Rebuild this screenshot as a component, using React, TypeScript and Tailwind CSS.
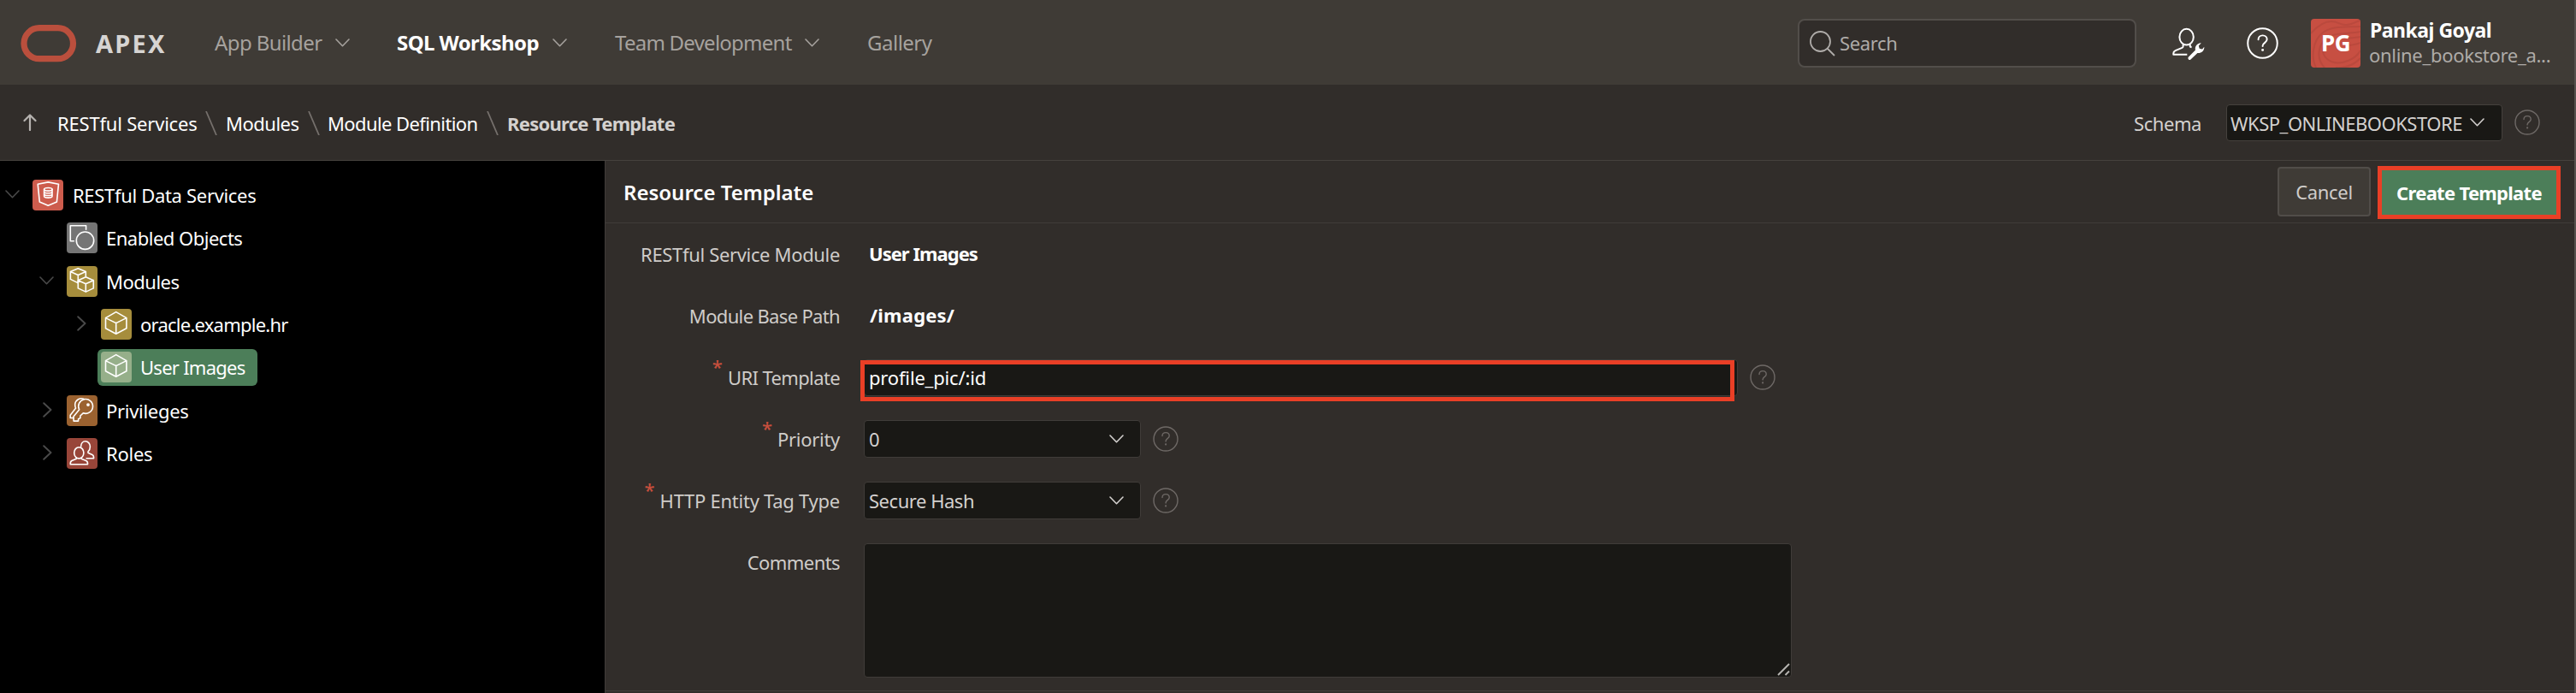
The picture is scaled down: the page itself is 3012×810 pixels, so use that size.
import type { ReactNode } from "react";

function Chevron({ className = "", dir = "down" }: { className?: string; dir?: "down" | "right" }) {
  return dir === "down" ? (
    <svg className={`h-[10px] w-[17px] shrink-0 ${className}`} viewBox="0 0 17 10" fill="none" stroke="currentColor" strokeWidth="1.6" strokeLinecap="round" strokeLinejoin="round">
      <path d="M1 1l7.5 7.7L16 1" />
    </svg>
  ) : (
    <svg className={`h-[18px] w-[11px] shrink-0 ${className}`} viewBox="0 0 11 18" fill="none" stroke="currentColor" strokeWidth="1.9" strokeLinecap="round" strokeLinejoin="round">
      <path d="M1.2 1.2L9.5 9l-8.3 7.8" />
    </svg>
  );
}

function Help({ className, thick = 1.4 }: { className: string; thick?: number }) {
  return (
    <svg className={`shrink-0 ${className}`} viewBox="0 0 30 30" fill="none" stroke="currentColor" strokeWidth={thick} strokeLinecap="round" strokeLinejoin="round">
      <circle cx="15" cy="15" r="14" />
      <path d="M11 11.6c0-2.3 1.7-4 4.1-4s4.1 1.7 4.1 3.8c0 3.2-4.1 3.3-4.1 6v.5" />
      <circle cx="15.1" cy="21.4" r="0.7" fill="currentColor" stroke="none" />
      <circle cx="15.1" cy="21.4" r="0.4" />
    </svg>
  );
}

function UserWrench() {
  return (
    <svg className="h-[38px] w-[38px] shrink-0" viewBox="0 0 38 38" fill="none" stroke="currentColor" strokeWidth="2" strokeLinejoin="round">
      <ellipse cx="16.6" cy="11.2" rx="8.2" ry="9.4" />
      <path d="M12.6 20v2.2c0 .8-.5 1.3-1.2 1.6l-7.8 3.3C2.2 27.8 1.3 29 1.3 30.5v1.3h16M20.8 20v2.6l1.8.8" />
      <path d="M18.8 34.8l8.2-8.3c-.8-3 .6-6.3 3.6-7.6 1-.4 2-.6 3-.5l-2.8 3 .9 3.4 3.3.8 2.3-2.8c.3 4.6-3.700 7.800-7.900 7.200l-8.200 7.800c-1.500 1.200-3.600-1.400-2.400-3z" fill="currentColor" stroke="none" />
    </svg>
  );
}

function Tile({ className, children }: { className: string; children: ReactNode }) {
  return (
    <span className={`flex h-9 w-9 shrink-0 rounded-[4px] text-white ${className}`}>
      <svg className="h-9 w-9" viewBox="0 0 36 36" fill="none" stroke="currentColor" strokeWidth="1.6" strokeLinejoin="round" strokeLinecap="round">
        {children}
      </svg>
    </span>
  );
}

const shield = (
  <>
    <path d="M6.2 5.2L18.3 2.9l12.2 2.3-2.1 20.8-10.1 4.3L8.3 26z" />
    <ellipse cx="18.3" cy="11.3" rx="4.7" ry="1.8" />
    <path d="M13.6 11.3v8c0 2.4 9.4 2.4 9.4 0v-8M13.6 14c0 2.4 9.4 2.4 9.4 0M13.6 16.7c0 2.4 9.4 2.4 9.4 0" />
  </>
);
const shapes = (
  <>
    <path d="M22.6 8.3V3.8H4.3v18h4" />
    <circle cx="21.5" cy="21.2" r="10.2" />
  </>
);
const cubes = (
  <>
    <path d="M13 19.6l-8.6-4.2V6.6L13.3 2.800l9 3.800v5.200M4.400 6.600l8.900 4 9-4M13.300 10.600v8.700" />
    <path d="M13.3 16.7l9-3.9 9 3.9v9.2l-9 4.2-9-4.2zM13.3 16.7l9 4 9-4M22.3 20.7v9.4" />
  </>
);
const cube = (
  <path d="M17.7 3.6l12.2 7v12.2l-12.2 6.5-12.2-6.5V10.6zM5.5 10.6l12.2 6 12.2-6M17.7 16.6v12.7" />
);
const keys = (
  <>
    <path d="M14.7 16.8a8.400 8.400 0 1 1 4.600 4L15.900 24v2.600l-2.300 1.200v2.300H8.100v-5.300z" />
    <path d="M20.3 4.400a7.600 7.600 0 0 0-10.600 6.100c-.1 1.900.2 3.200.9 4.600L4.200 23.200v3.300h3.500" />
    <circle cx="25" cy="11.1" r="1.1" fill="currentColor" />
  </>
);
const roles = (
  <>
    <ellipse cx="14.3" cy="17.3" rx="5.6" ry="6.6" />
    <path d="M11.3 23v1.300l-5.400 2.200c-1.400.7-1.800 2-1.600 4.200h20.200c.2-2.200-.4-3.600-1.800-4.200L17.200 24.300V23" />
    <path d="M16.600 10.200c0-4 2.300-6.400 5.300-6.400s5.500 2.700 5.500 6.300c0 2.700-1.100 4.600-2.400 5.700v1.400l4.800 2.200c1.200.6 1.900 2.100 1.800 4.300h-8.500" />
  </>
);

function NavItem({ label, className, menu = true }: { label: string; className: string; menu?: boolean }) {
  return (
    <a className={`flex items-center text-[24px] ${className}`}>
      <span className="flex-1">{label}</span>
      {menu && <Chevron className="text-[#a6a29e]" />}
    </a>
  );
}

function Slash({ className }: { className: string }) {
  return (
    <svg className={`h-[28px] w-[14px] shrink-0 ${className}`} viewBox="0 0 14 28" fill="none" stroke="#75706c" strokeWidth="1.8">
      <path d="M1 0l12 28" />
    </svg>
  );
}

function TopBar() {
  return (
    <header className="flex h-[99px] items-center bg-[#3f3b36] pr-[26px] pl-6">
      <svg className="mt-[3px] h-[44px] w-[66px] shrink-0" viewBox="0 0 66 44">
        <rect x="4" y="3.7" width="57.5" height="36" rx="18" fill="none" stroke="#ba4f3d" strokeWidth="7.2" />
      </svg>
      <span className="ml-[22px] w-[139px] pt-[2px] text-[29px] font-bold tracking-[2.2px] text-[#d6d4d2]">APEX</span>
      <nav className="flex flex-1 items-center pt-[1px]">
        <NavItem label="App Builder" className="w-[158px] tracking-[-0.6px] text-[#a6a29e]" />
        <NavItem label="SQL Workshop" className="ml-[55px] w-[199px] font-bold tracking-[-0.58px] text-white" />
        <NavItem label="Team Development" className="ml-[56px] w-[239px] tracking-[-0.75px] text-[#a6a29e]" />
        <NavItem label="Gallery" className="ml-[56px] tracking-[-0.5px] text-[#a6a29e]" menu={false} />
      </nav>
      <label className="mt-[2px] flex h-[57px] w-[396px] items-center rounded-[8px] border-2 border-[#524e4a] bg-[#312d2a] pl-[12px]">
        <svg className="h-[30px] w-[30px] shrink-0" viewBox="0 0 30 30" fill="none" stroke="#b0adaa" strokeWidth="1.8">
          <circle cx="12.5" cy="12.5" r="11.5" />
          <path d="M20.5 20.5l8.5 8.5" />
        </svg>
        <span className="ml-[5px] text-[22px] tracking-[-0.35px] text-[#aeaba8]">Search</span>
      </label>
      <span className="mt-[2px] ml-[42px] text-white"><UserWrench /></span>
      <span className="mt-[2px] ml-[49px] text-white"><Help className="h-[37px] w-[37px]" thick={1.6} /></span>
      <span className="relative mt-[2px] ml-[38px] flex h-[57px] w-[58px] items-center justify-center overflow-hidden rounded-[4px] bg-[#c74f42]">
        <svg className="absolute inset-0 h-[57px] w-[58px]" viewBox="0 0 58 57" fill="none" stroke="#ba493d" strokeWidth="2">
          <path d="M0 17C8 8 15 3 24 3s9 5 18 4 10-4 16-5M6 57C0 45 2 26 13 17s25-7 45-8M16 57C6 47 8 31 18 23s27-5 40-8M24 50c-9-4-13-13-7-19M24 50c13 5 29-4 34-13M29 57c12 1 22-4 29-11M43 23c6-1 11-1 15-2M45 31c5-1 9-1 13-3" />
        </svg>
        <span className="relative text-[26px] font-bold tracking-[-0.5px] text-white">PG</span>
      </span>
      <span className="ml-[10px] flex w-[214px] flex-col whitespace-nowrap">
        <span className="pl-[1px] text-[23px] leading-[29px] font-bold tracking-[-0.5px] text-white">Pankaj Goyal</span>
        <span className="text-[22px] leading-[29px] tracking-[-0.3px] text-[#aeaba8]">online_bookstore_a...</span>
      </span>
    </header>
  );
}

function BreadcrumbBar() {
  return (
    <div className="flex h-[89px] items-center border-b border-[#45413d] pr-[40px] pl-[27px] text-[22px] text-white">
      <svg className="h-[20px] w-[16px] shrink-0" viewBox="0 0 16 20" fill="none" stroke="#b5b2af" strokeWidth="2.2" strokeLinecap="round" strokeLinejoin="round">
        <path d="M8 19V1.500M1.500 8L8 1.500 14.500 8" />
      </svg>
      <nav className="ml-[24px] flex flex-1 items-center pt-[2px]">
        <a className="w-[173px] tracking-[-0.2px]">RESTful Services</a>
        <Slash className="mr-[10px]" />
        <a className="w-[96px] tracking-[-0.5px]">Modules</a>
        <Slash className="mr-[9px]" />
        <a className="w-[186px] tracking-[-0.6px]">Module Definition</a>
        <Slash className="mr-[10px]" />
        <span className="font-bold tracking-[-0.72px] text-[#d4d1cf]">Resource Template</span>
      </nav>
      <span className="mt-[2px] tracking-[-0.43px] text-[#d4d1cf]">Schema</span>
      <span className="ml-[29px] flex h-[43px] w-[323px] items-center rounded-[4px] border border-[#45413d] bg-[#191815] pl-[4px] text-[#d4d1cf]">
        <span className="w-[272px] overflow-hidden pt-[2px] tracking-[-0.47px]">WKSP_ONLINEBOOKSTORE</span>
        <Chevron className="ml-[8px]" />
      </span>
      <Help className="ml-[14px] h-[30px] w-[30px] text-[#6e6966]" />
    </div>
  );
}

type NodeProps = {
  label: string;
  indent: string;
  text: string;
  tile: string;
  icon: ReactNode;
  state?: "open" | "closed";
  selected?: boolean;
};

function TreeRow({ label, indent, text, tile, icon, state, selected }: NodeProps) {
  return (
    <li className={`flex h-[50.33px] items-center ${indent}`}>
      <span className="-mt-[2px] flex w-[26px] shrink-0 text-[#4a4a4a]">
        {state === "open" && <Chevron className="-ml-[2px]" />}
        {state === "closed" && <Chevron dir="right" className="ml-[2px]" />}
      </span>
      <span className={`flex h-[43px] items-center rounded-[6px] pr-[14px] pl-1 ${selected ? "bg-[#4c7e59]" : ""}`}>
        <Tile className={tile}>{icon}</Tile>
        <span className={`ml-[10px] pt-[1px] text-[22px] whitespace-nowrap text-white ${text}`}>{label}</span>
      </span>
    </li>
  );
}

function Sidebar() {
  return (
    <aside className="w-[707px] shrink-0 bg-black pt-[15px]">
      <ul>
        <TreeRow label="RESTful Data Services" indent="pl-[8px]" text="tracking-[-0.32px] pl-[1px]" tile="bg-[#cd5c4d]" icon={shield} state="open" />
        <TreeRow label="Enabled Objects" indent="pl-[48px]" text="tracking-[-0.5px]" tile="bg-[#757575]" icon={shapes} />
        <TreeRow label="Modules" indent="pl-[48px]" text="tracking-[-0.5px]" tile="bg-[#a68d3c]" icon={cubes} state="open" />
        <TreeRow label="oracle.example.hr" indent="pl-[88px]" text="tracking-[-0.76px]" tile="bg-[#a68d3c]" icon={cube} state="closed" />
        <TreeRow label="User Images" indent="pl-[88px]" text="tracking-[-0.74px]" tile="bg-[#96af8a]" icon={cube} selected />
        <TreeRow label="Privileges" indent="pl-[48px]" text="tracking-[-0.3px]" tile="bg-[#9b6230]" icon={keys} state="closed" />
        <TreeRow label="Roles" indent="pl-[48px]" text="tracking-[-0.25px]" tile="bg-[#984539]" icon={roles} state="closed" />
      </ul>
    </aside>
  );
}

function Field({ label, text, required, children }: { label: string; text: string; required?: boolean; children?: ReactNode }) {
  return (
    <div className="flex h-[72px] items-center text-[22px]">
      <div className="flex w-[274px] shrink-0 items-center justify-end whitespace-nowrap text-[#cfccc9]">
        {required && <span className="mr-[6px] -mt-[26px] font-medium text-[#c74f3d]">*</span>}
        <span className={text}>{label}</span>
      </div>
      {children}
    </div>
  );
}

function Select({ value, text = "" }: { value: string; text?: string }) {
  return (
    <>
      <span className="-mt-[1px] ml-[28px] flex h-[44px] w-[324px] items-center justify-between rounded-[4px] border border-[#403c39] bg-[#191815] pr-[19px] pl-[5px] text-[#d4d1cf]">
        <span className={`pt-[1px] ${text}`}>{value}</span>
        <Chevron />
      </span>
      <Help className="-mt-[1px] ml-[14px] h-[30px] w-[30px] text-[#6e6966]" />
    </>
  );
}

function Main() {
  return (
    <main className="flex-1 border-l border-[#403c39]">
      <div className="flex h-[73px] items-center border-b border-[#403c39] pr-[16px] pl-[21px]">
        <h1 className="mt-[1px] flex-1 text-[24px] font-semibold text-white">Resource Template</h1>
        <button className="flex h-[58px] w-[109px] items-center justify-center rounded-[4px] border-2 border-[#514d49] bg-[#3f3b36] text-[22px] tracking-[-0.33px] text-[#cfccc9]">Cancel</button>
        <button className="mt-[2px] ml-[8px] flex h-[62px] w-[214px] items-center justify-center border-[5px] border-[#e93f26] bg-[#4c7e59] text-[22px] font-bold tracking-[-0.7px] text-white">Create Template</button>
      </div>
      <form className="flex h-[547px] flex-col border-b border-[#403c39]">
        <Field label="RESTful Service Module" text="tracking-[-0.34px]">
          <span className="-mt-[1px] ml-[34px] font-bold tracking-[-0.98px] text-white">User Images</span>
        </Field>
        <Field label="Module Base Path" text="tracking-[-0.66px]">
          <span className="-mt-[1px] ml-[35px] font-bold tracking-[0.2px] text-white">/images/</span>
        </Field>
        <Field label="URI Template" text="tracking-[-0.62px]" required>
          <span className="relative mt-[1px] ml-[28px] flex h-[43px] w-[1022px] items-center rounded-[4px] border border-[#403c39] bg-[#191815] pl-[5px] text-white">
            <span className="tracking-[-0.17px]">profile_pic/:id</span>
            <span className="absolute top-0 -left-[5px] h-[48px] w-[1022px] border-[5px] border-[#e93f26]" />
          </span>
          <Help className="ml-[14px] h-[30px] w-[30px] text-[#6e6966]" />
        </Field>
        <Field label="Priority" text="tracking-[-0.3px]" required>
          <Select value="0" />
        </Field>
        <Field label="HTTP Entity Tag Type" text="tracking-[-0.26px]" required>
          <Select value="Secure Hash" text="tracking-[-0.47px]" />
        </Field>
        <div className="flex">
          <Field label="Comments" text="tracking-[-0.58px]" />
          <div className="mt-[14px] ml-[28px] flex h-[157px] w-[1085px] items-end justify-end rounded-[4px] border border-[#403c39] bg-[#191815] pr-[1px] pb-[1px]">
            <svg className="h-[15px] w-[15px]" viewBox="0 0 15 15" fill="none" stroke="#b5b3b0" strokeWidth="2">
              <path d="M1 14L14 1M9.500 14L14 9.500" />
            </svg>
          </div>
        </div>
      </form>
    </main>
  );
}

export default function App() {
  return (
    <div className="flex h-[810px] w-[3012px] overflow-hidden bg-[#312d2a] font-['Noto_Sans','Open_Sans',sans-serif]">
      <div className="flex w-[3010px] flex-col">
        <TopBar />
        <BreadcrumbBar />
        <div className="flex flex-1">
          <Sidebar />
          <Main />
        </div>
      </div>
      <div className="w-[2px] bg-[#55514d]" />
    </div>
  );
}
